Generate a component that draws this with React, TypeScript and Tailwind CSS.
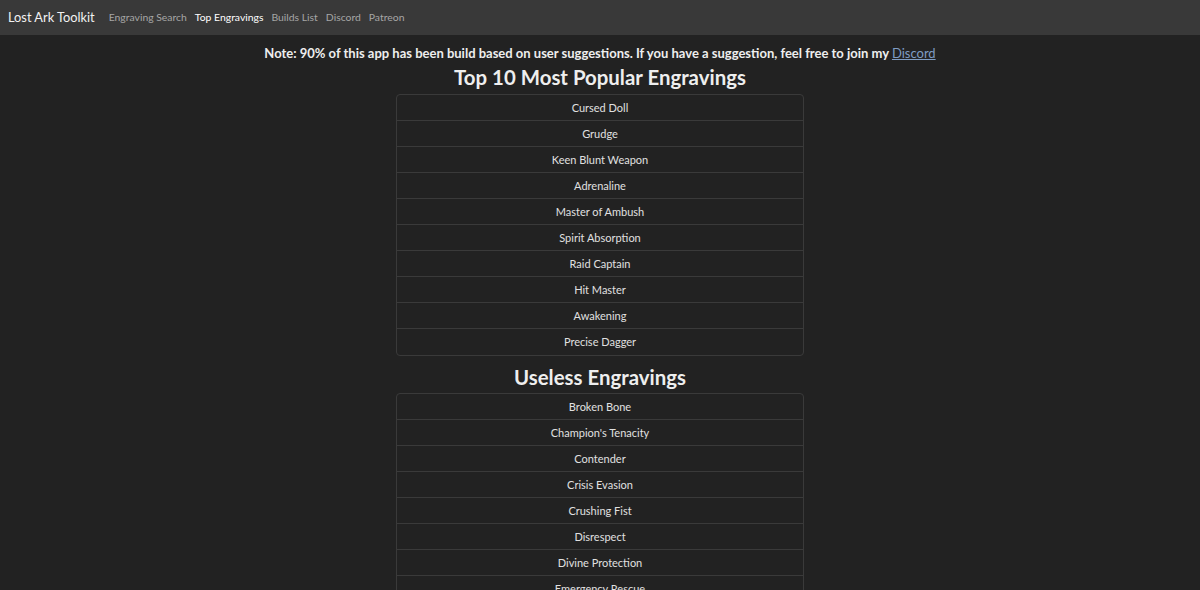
import React from 'react';

const popular = [
  'Cursed Doll',
  'Grudge',
  'Keen Blunt Weapon',
  'Adrenaline',
  'Master of Ambush',
  'Spirit Absorption',
  'Raid Captain',
  'Hit Master',
  'Awakening',
  'Precise Dagger',
];

const useless = [
  'Broken Bone',
  "Champion's Tenacity",
  'Contender',
  'Crisis Evasion',
  'Crushing Fist',
  'Disrespect',
  'Divine Protection',
  'Emergency Rescue',
  'Enhanced Weapon',
  'Fortitude',
];

const navItems = [
  { label: 'Engraving Search', active: false },
  { label: 'Top Engravings', active: true },
  { label: 'Builds List', active: false },
  { label: 'Discord', active: false },
  { label: 'Patreon', active: false },
];

function EngravingList({ items }: { items: string[] }) {
  return (
    <ul className="w-[408px] rounded border border-[#3a3a3a]">
      {items.map((name, i) => (
        <li
          key={name}
          className={`h-[26px] flex items-center justify-center pt-[1px] text-[11px] text-[#e0e0e0] ${
            i < items.length - 1 ? 'border-b border-[#3a3a3a]' : ''
          }`}
        >
          {name}
        </li>
      ))}
    </ul>
  );
}

export default function App() {
  return (
    <div
      className="min-h-screen bg-[#222222] text-[#e8e8e8]"
      style={{ fontFamily: 'Lato, "Noto Sans", sans-serif' }}
    >
      {/* top bar */}
      <header className="h-[35px] bg-[#393939] flex items-center px-2">
        <span className="text-[12.8px] text-[#f2f2f2] mr-[14px]">Lost Ark Toolkit</span>
        <nav className="flex items-center gap-[8px]">
          {navItems.map((item) => (
            <span
              key={item.label}
              className={`text-[10.4px] ${item.active ? 'text-white' : 'text-[#a6a6a6]'}`}
            >
              {item.label}
            </span>
          ))}
        </nav>
      </header>

      <main className="flex flex-col items-center pt-[9px]">
        <p className="text-[13px] font-bold text-[#eeeeee] leading-[18px]">
          Note: 90% of this app has been build based on user suggestions. If you have a suggestion, feel free to
          join my <span className="text-[#7f9cc2] underline font-normal">Discord</span>
        </p>
        <h2 className="text-[20.4px] font-bold leading-[30px] mb-[2px] text-[#eeeeee]">
          Top 10 Most Popular Engravings
        </h2>
        <EngravingList items={popular} />
        <h2 className="text-[20.4px] font-bold leading-[30px] mt-[6px] mb-[1px] text-[#eeeeee]">
          Useless Engravings
        </h2>
        <EngravingList items={useless} />
      </main>
    </div>
  );
}
